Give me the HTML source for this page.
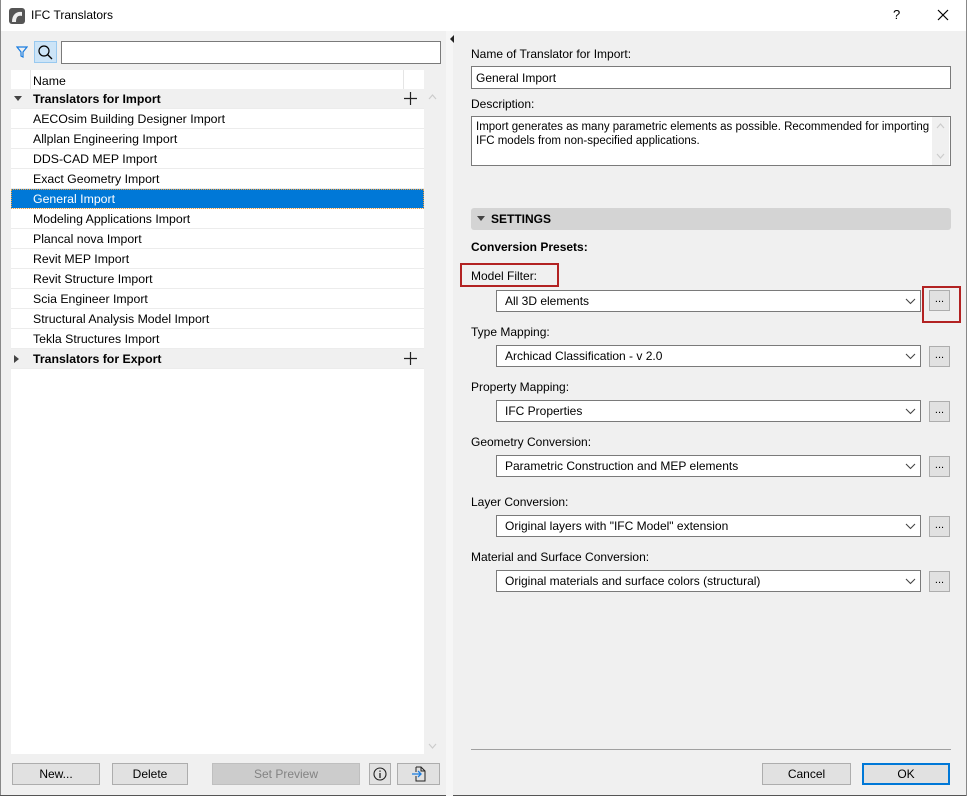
<!DOCTYPE html>
<html><head><meta charset="utf-8">
<style>
*{box-sizing:border-box;margin:0;padding:0}
body{width:967px;height:796px;overflow:hidden;background:#f0f0f0;font-family:"Liberation Sans",sans-serif;font-size:12px;color:#000;position:relative}
.a{position:absolute}
.title{left:0;top:0;width:967px;height:31px;background:#fff}
.row{position:absolute;left:11px;width:413px;height:20px;line-height:21px;padding-left:22px;border-bottom:1px solid #ececec;background:#fff;white-space:nowrap;font-size:12.3px}
.grp{background:#f0f0f0;font-weight:bold}
.sel{background:#0078d7;color:#fff;outline:1px dotted #f0a040;outline-offset:-1px}
.lbl{position:absolute;left:471px}
.dd{position:absolute;left:496px;width:425px;height:22px;background:#fff;border:1px solid #7a7a7a;padding-left:8px;line-height:20px}
.dd svg{position:absolute;right:4px;top:7px}
.dots{position:absolute;left:929px;width:21px;height:21px;background:#e1e1e1;border:1px solid #adadad;text-align:center;line-height:17px;font-size:11px}
.btn{position:absolute;top:763px;height:22px;background:#e1e1e1;border:1px solid #adadad;text-align:center;line-height:20px}
</style></head><body>
<div class="a title"></div>
<div class="a" style="left:0;top:0;width:1px;height:796px;background:#888"></div>
<div class="a" style="left:0;top:795px;width:967px;height:1px;background:#555"></div>
<div class="a" style="left:966px;top:0;width:1px;height:796px;background:#888"></div>
<svg class="a" style="left:9px;top:8px" width="16" height="16"><rect x="0" y="0" width="16" height="16" rx="3" fill="#555"/><path d="M3 14 C3 6 8 3 13 4 L13 8 C9 7 7 9 7 14Z" fill="#eee"/></svg>
<div class="a" style="left:31px;top:8px;font-size:12px">IFC Translators</div>
<div class="a" style="left:893px;top:7px;font-size:13px">?</div>
<svg class="a" style="left:937px;top:9px" width="12" height="12"><path d="M1 1L11 11M11 1L1 11" stroke="#000" stroke-width="1.2"/></svg>

<svg class="a" style="left:16px;top:46px" width="12" height="12"><path d="M1 1H11L7 6V11L5 10V6Z" fill="none" stroke="#1a7de0" stroke-width="1.2"/></svg>
<div class="a" style="left:34px;top:41px;width:23px;height:22px;background:#cce4f7;border:1px solid #99c9ef"></div>
<svg class="a" style="left:37px;top:44px" width="16" height="16"><circle cx="7" cy="7" r="5" fill="none" stroke="#000" stroke-width="1.2"/><path d="M10.5 10.5L15 15" stroke="#000" stroke-width="1.3"/></svg>
<div class="a" style="left:61px;top:41px;width:380px;height:23px;background:#fff;border:1px solid #7a7a7a"></div>

<div class="a" style="left:11px;top:70px;width:413px;height:684px;background:#fff"></div>
<div class="a" style="left:30px;top:70px;width:1px;height:19px;background:#e5e5e5"></div>
<div class="a" style="left:403px;top:70px;width:1px;height:19px;background:#e5e5e5"></div>
<div class="a" style="left:33px;top:74px;font-size:12.3px">Name</div>
<div class="row grp" style="top:89px">Translators for Import</div>
<svg class="a" style="left:14px;top:96px" width="8" height="6"><path d="M0 0H8L4 5Z" fill="#444"/></svg>
<svg class="a" style="left:404px;top:92px" width="13" height="13"><path d="M6.5 0V13M0 6.5H13" stroke="#222" stroke-width="1.2"/></svg>
<div class="row" style="top:109px">AECOsim Building Designer Import</div>
<div class="row" style="top:129px">Allplan Engineering Import</div>
<div class="row" style="top:149px">DDS-CAD MEP Import</div>
<div class="row" style="top:169px">Exact Geometry Import</div>
<div class="row sel" style="top:189px">General Import</div>
<div class="row" style="top:209px">Modeling Applications Import</div>
<div class="row" style="top:229px">Plancal nova Import</div>
<div class="row" style="top:249px">Revit MEP Import</div>
<div class="row" style="top:269px">Revit Structure Import</div>
<div class="row" style="top:289px">Scia Engineer Import</div>
<div class="row" style="top:309px">Structural Analysis Model Import</div>
<div class="row" style="top:329px">Tekla Structures Import</div>
<div class="row grp" style="top:349px">Translators for Export</div>
<svg class="a" style="left:14px;top:355px" width="6" height="8"><path d="M0 0V8L5 4Z" fill="#444"/></svg>
<svg class="a" style="left:404px;top:352px" width="13" height="13"><path d="M6.5 0V13M0 6.5H13" stroke="#222" stroke-width="1.2"/></svg>
<svg class="a" style="left:428px;top:94px" width="9" height="6"><path d="M1 5L4.5 1L8 5" fill="none" stroke="#ccc" stroke-width="1.2"/></svg>
<svg class="a" style="left:428px;top:743px" width="9" height="6"><path d="M1 1L4.5 5L8 1" fill="none" stroke="#ccc" stroke-width="1.2"/></svg>

<div class="a" style="left:446px;top:31px;width:7px;height:765px;background:#f6f6f6"></div>
<svg class="a" style="left:450px;top:35px" width="5" height="8"><path d="M4 0V8L0 4Z" fill="#222"/></svg>

<div class="lbl" style="top:47px">Name of Translator for Import:</div>
<div class="a" style="left:471px;top:66px;width:480px;height:23px;background:#fff;border:1px solid #7a7a7a;padding-left:4px;line-height:22px">General Import</div>
<div class="lbl" style="top:97px">Description:</div>
<div class="a" style="left:471px;top:116px;width:480px;height:50px;background:#fff;border:1px solid #7a7a7a;padding:3px 0 0 4px;line-height:14px;font-size:11.5px">Import generates as many parametric elements as possible. Recommended for importing<br>IFC models from non-specified applications.</div>
<div class="a" style="left:932px;top:117px;width:17px;height:48px;background:#f0f0f0"></div>
<svg class="a" style="left:936px;top:123px" width="9" height="6"><path d="M1 5L4.5 1L8 5" fill="none" stroke="#ccc" stroke-width="1.2"/></svg>
<svg class="a" style="left:936px;top:153px" width="9" height="6"><path d="M1 1L4.5 5L8 1" fill="none" stroke="#ccc" stroke-width="1.2"/></svg>

<div class="a" style="left:471px;top:208px;width:480px;height:22px;background:#d4d4d4;border-radius:3px"></div>
<svg class="a" style="left:477px;top:216px" width="8" height="6"><path d="M0 0H8L4 5Z" fill="#444"/></svg>
<div class="a" style="left:491px;top:212px;font-weight:bold">SETTINGS</div>
<div class="lbl" style="top:240px;font-weight:bold">Conversion Presets:</div>

<div class="a" style="left:460px;top:263px;width:99px;height:24px;border:2px solid #b22222"></div>
<div class="lbl" style="top:269px">Model Filter:</div>
<div class="dd" style="top:290px">All 3D elements<svg width="11" height="7"><path d="M1 1L5.5 5.5L10 1" fill="none" stroke="#444" stroke-width="1.1"/></svg></div>
<div class="dots" style="top:290px">...</div>
<div class="a" style="left:922px;top:286px;width:39px;height:37px;border:2px solid #b22222"></div>

<div class="lbl" style="top:325px">Type Mapping:</div>
<div class="dd" style="top:345px">Archicad Classification - v 2.0<svg width="11" height="7"><path d="M1 1L5.5 5.5L10 1" fill="none" stroke="#444" stroke-width="1.1"/></svg></div>
<div class="dots" style="top:346px">...</div>
<div class="lbl" style="top:380px">Property Mapping:</div>
<div class="dd" style="top:400px">IFC Properties<svg width="11" height="7"><path d="M1 1L5.5 5.5L10 1" fill="none" stroke="#444" stroke-width="1.1"/></svg></div>
<div class="dots" style="top:401px">...</div>
<div class="lbl" style="top:435px">Geometry Conversion:</div>
<div class="dd" style="top:455px">Parametric Construction and MEP elements<svg width="11" height="7"><path d="M1 1L5.5 5.5L10 1" fill="none" stroke="#444" stroke-width="1.1"/></svg></div>
<div class="dots" style="top:456px">...</div>
<div class="lbl" style="top:495px">Layer Conversion:</div>
<div class="dd" style="top:515px">Original layers with "IFC Model" extension<svg width="11" height="7"><path d="M1 1L5.5 5.5L10 1" fill="none" stroke="#444" stroke-width="1.1"/></svg></div>
<div class="dots" style="top:516px">...</div>
<div class="lbl" style="top:550px">Material and Surface Conversion:</div>
<div class="dd" style="top:570px">Original materials and surface colors (structural)<svg width="11" height="7"><path d="M1 1L5.5 5.5L10 1" fill="none" stroke="#444" stroke-width="1.1"/></svg></div>
<div class="dots" style="top:571px">...</div>

<div class="a" style="left:471px;top:749px;width:480px;height:1px;background:#a0a0a0"></div>

<div class="btn" style="left:12px;width:88px">New...</div>
<div class="btn" style="left:112px;width:76px">Delete</div>
<div class="btn" style="left:212px;width:148px;background:#cccccc;border-color:#bfbfbf;color:#838383">Set Preview</div>
<div class="btn" style="left:369px;width:22px"><svg style="margin-top:3px" width="14" height="14"><circle cx="7" cy="7" r="6" fill="none" stroke="#222" stroke-width="1.1"/><path d="M7 6V11M7 3.5V4.8" stroke="#222" stroke-width="1.3"/></svg></div>
<div class="btn" style="left:397px;width:43px"><svg style="margin-top:2px" width="16" height="16"><path d="M5 1H10L14 5V15H5V10M5 6V1" fill="none" stroke="#222" stroke-width="1"/><path d="M10 1V5H14" fill="none" stroke="#222" stroke-width="1"/><path d="M1 8H10M7 5L10 8L7 11" fill="none" stroke="#1a7de0" stroke-width="1.3"/></svg></div>
<div class="btn" style="left:762px;width:89px">Cancel</div>
<div class="btn" style="left:862px;width:88px;border:2px solid #0078d7;line-height:18px">OK</div>
</body></html>
